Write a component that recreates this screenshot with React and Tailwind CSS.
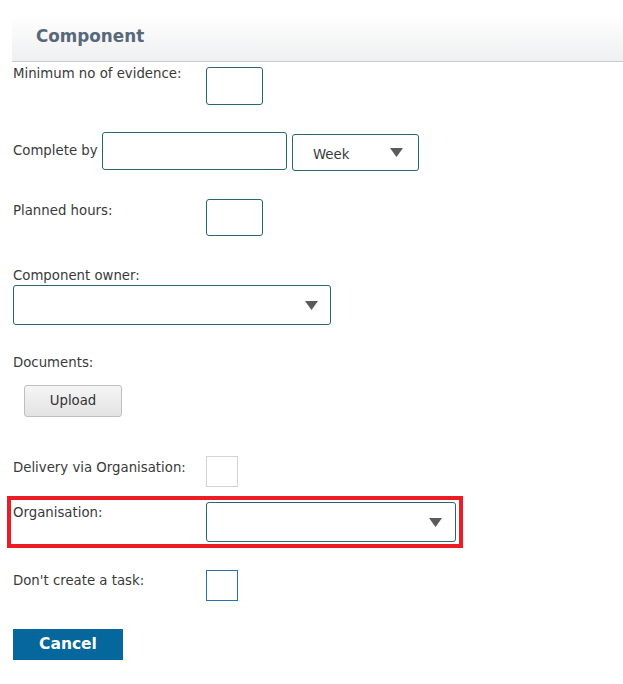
import React from 'react'

const font = { fontFamily: '"DejaVu Sans", Verdana, sans-serif' }

function Caret({ className = '' }) {
  return (
    <svg width="13" height="9" viewBox="0 0 13 9" className={className}>
      <path d="M0 0 H13 L6.5 9 Z" fill="#5b5b5b" />
    </svg>
  )
}

function Label({ children, className = '' }) {
  return <div className={`text-[13.3px] leading-[16px] text-[#3a3a3a] ${className}`}>{children}</div>
}

function Select({ className = '', caretRight = 'pr-3', children }) {
  return (
    <div className={`flex items-center justify-between border border-[#2b6474] rounded-[3px] bg-white ${caretRight} ${className}`}>
      <span className="text-[13.3px] text-[#3a3a3a]">{children}</span>
      <Caret />
    </div>
  )
}

export default function App() {
  return (
    <div className="w-[623px] h-[684px] bg-white flex flex-col" style={font}>
      {/* header */}
      <div className="ml-[12px] mt-[13px] h-[49px] border-b border-[#cbcbcb] bg-gradient-to-b from-white to-[#eff0f1] pl-[24px] pt-[13px]">
        <h1 className="text-[16.8px] font-bold text-[#58687a] leading-[20px]">Component</h1>
      </div>

      <div className="ml-[13px] mt-[5px] flex items-start">
        <Label className="w-[193px] -mt-[1px]">Minimum no of evidence:</Label>
        <div className="w-[57px] h-[38px] border border-[#2b6474] rounded-[3px]" />
      </div>

      <div className="ml-[13px] mt-[27px] flex items-start">
        <Label className="w-[89px] mt-[11px]">Complete by</Label>
        <div className="w-[185px] h-[38px] border border-[#2b6474] rounded-[3px]" />
        <Select className="ml-[5px] mt-[2px] w-[127px] h-[37px] pl-[20px]" caretRight="pr-[15px]">
          <span className="relative top-[2px]">Week</span>
        </Select>
      </div>

      <div className="ml-[13px] mt-[28px] flex items-start">
        <Label className="w-[193px] mt-[4px]">Planned hours:</Label>
        <div className="w-[57px] h-[37px] border border-[#2b6474] rounded-[3px]" />
      </div>

      <Label className="ml-[13px] mt-[32px]">Component owner:</Label>
      <Select className="ml-[13px] mt-[1px] w-[318px] h-[40px]" caretRight="pr-[12px]" />

      <Label className="ml-[13px] mt-[30px]">Documents:</Label>
      <button className="ml-[24px] mt-[14px] w-[98px] h-[32px] rounded-[3px] border border-[#bfbfbf] bg-gradient-to-b from-[#f5f5f5] to-[#e3e3e3] text-[13.3px] text-[#333]">
        Upload
      </button>

      <div className="ml-[13px] mt-[39px] flex items-start">
        <Label className="w-[193px] mt-[4px]">Delivery via Organisation:</Label>
        <div className="w-[32px] h-[31px] border border-[#d3d3d3]" />
      </div>

      <div className="ml-[7px] mt-[9px] w-[456px] h-[52px] border-[4px] border-[#ed1c24] flex items-start pl-[2px] pt-[2px]">
        <Label className="w-[193px] mt-[3px]">Organisation:</Label>
        <Select className="w-[250px] h-[40px]" caretRight="pr-[13px]" />
      </div>

      <div className="ml-[13px] mt-[22px] flex items-start">
        <Label className="w-[193px] mt-[3px]">Don't create a task:</Label>
        <div className="w-[32px] h-[31px] border border-[#2a72ad]" />
      </div>

      <button className="ml-[13px] mt-[28px] w-[110px] h-[31px] bg-[#05679b] text-white text-[15.5px] font-bold leading-none">
        Cancel
      </button>
    </div>
  )
}
